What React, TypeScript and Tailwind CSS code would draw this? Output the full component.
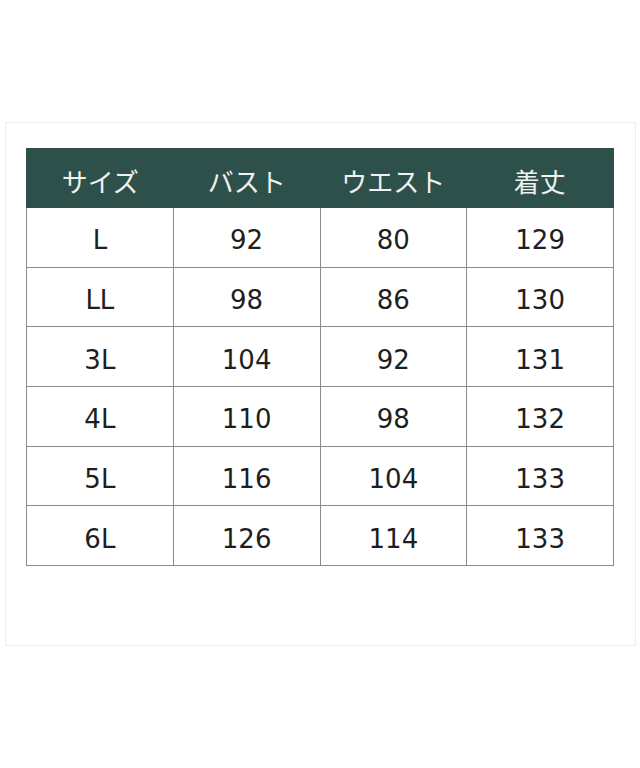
import React from "react";

const rows = [
  ["L", "92", "80", "129"],
  ["LL", "98", "86", "130"],
  ["3L", "104", "92", "131"],
  ["4L", "110", "98", "132"],
  ["5L", "116", "104", "133"],
  ["6L", "126", "114", "133"],
];

const headers = ["サイズ", "バスト", "ウエスト", "着丈"];

export default function App() {
  return (
    <div
      className="w-[640px] h-[768px] bg-white pt-[122px] pl-[5px]"
      style={{ fontFamily: '"DejaVu Sans", "Noto Sans CJK JP", sans-serif' }}
    >
      <div className="w-[631px] h-[524px] border border-[#eeeeee] pl-[20px] pt-[25px]">
        <div className="w-[588px]">
          <div className="grid grid-cols-4 h-[60px] bg-[#2e504b] border border-[#2e504b]">
            {headers.map((h) => (
              <div
                key={h}
                className="flex items-center justify-center text-[26px] text-[#eef2f1] pt-[5px]"
                style={{ fontFamily: '"Noto Sans CJK JP", sans-serif' }}
              >
                {h}
              </div>
            ))}
          </div>
          <div className="border-l border-[#8a8a8a]">
            {rows.map((r, i) => (
              <div key={i} className="grid grid-cols-4 h-[59.67px]">
                {r.map((c, j) => (
                  <div
                    key={j}
                    className="flex items-center justify-center border-r border-b border-[#8a8a8a] text-[26px] text-[#1e1e1e] pt-[7px]"
                  >
                    {c}
                  </div>
                ))}
              </div>
            ))}
          </div>
        </div>
      </div>
    </div>
  );
}
